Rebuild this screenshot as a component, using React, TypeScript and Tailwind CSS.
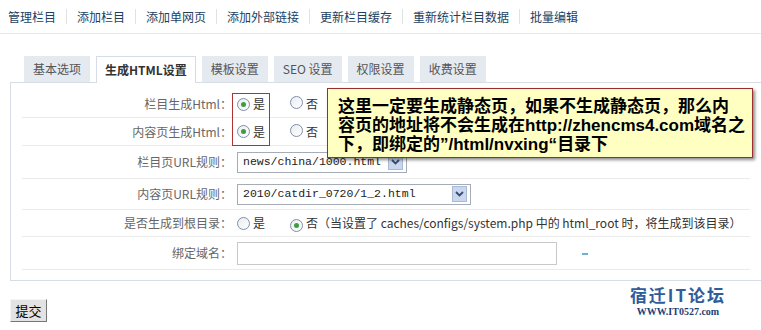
import React from "react";

const CJK = '"Noto Sans CJK SC", "Liberation Sans", sans-serif';

function Radio({ checked }: { checked?: boolean }) {
  return (
    <span className="inline-flex w-[13px] h-[13px] shrink-0 rounded-full border border-[#7f8fa6] bg-gradient-to-br from-[#e9ecf1] to-white items-center justify-center">
      {checked && <span className="w-[5px] h-[5px] rounded-full bg-[#3c9f3c]" />}
    </span>
  );
}

function SelectArrow() {
  return (
    <span className="flex w-[15px] h-[16px] items-center justify-center bg-[#c9d7ef] border border-[#a8bad8]">
      <svg width="9" height="6" viewBox="0 0 9 6">
        <path d="M1 1 L4.5 4.5 L8 1" fill="none" stroke="#3a4c6e" strokeWidth="1.8" />
      </svg>
    </span>
  );
}

function Row({ label, h, children }: { label: string; h: string; children?: React.ReactNode }) {
  return (
    <div className={`flex items-center border-b border-[#ebebeb] ${h}`}>
      <div className="w-[210px] text-right text-[12px] text-[#666]">{label}</div>
      <div className="pl-[5px] flex items-center text-[12px] text-[#333]">{children}</div>
    </div>
  );
}

export default function App() {
  const nav = ["管理栏目", "添加栏目", "添加单网页", "添加外部链接", "更新栏目缓存", "重新统计栏目数据", "批量编辑"];
  const tabs = ["基本选项", "生成HTML设置", "模板设置", "SEO 设置", "权限设置", "收费设置"];
  const latin = { fontFamily: '"Liberation Sans", sans-serif' };
  return (
    <div className="relative w-[761px] h-[330px] overflow-hidden bg-white" style={{ fontFamily: CJK }}>
      {/* nav */}
      <div className="flex items-center h-[34px] border-b border-[#e8e8e8] pl-[8px]">
        {nav.map((n, i) => (
          <React.Fragment key={n}>
            {i > 0 && <span className="w-px h-[15px] bg-[#e2e2e2] mx-[10px]" />}
            <span className="text-[12px] text-[#1c3f62]">{n}</span>
          </React.Fragment>
        ))}
      </div>

      {/* tabs */}
      <div className="flex items-start gap-[6px] pl-[24px] mt-[22px] h-[27px]">
        {tabs.map((t, i) =>
          i === 1 ? (
            <div
              key={t}
              className="relative z-10 h-[27px] px-[8px] flex items-center bg-white border border-b-0 border-[#d5dce5] text-[12px] font-bold text-[#333]"
            >
              {t}
            </div>
          ) : (
            <div key={t} className="h-[26px] px-[9px] flex items-center bg-[#e5eaf1] text-[12px] text-[#555]">
              {t}
            </div>
          )
        )}
      </div>

      {/* panel */}
      <div className="-mt-px ml-[10px] w-[752px] border border-[#d7dde6] px-[11px] pt-[8px] pb-[10px]">
        <Row label="栏目生成Html：" h="h-[27px]">
          <Radio checked />
          <span className="ml-[3px]">是</span>
          <span className="ml-[25px]"><Radio /></span>
          <span className="ml-[3px]">否</span>
        </Row>
        <Row label="内容页生成Html：" h="h-[28px]">
          <Radio checked />
          <span className="ml-[3px]">是</span>
          <span className="ml-[25px]"><Radio /></span>
          <span className="ml-[3px]">否</span>
        </Row>
        <Row label="栏目页URL规则：" h="h-[33px]">
          <div className="w-[170px] h-[21px] border border-[#a5acb5] flex items-center justify-between pl-[5px] pr-[3px] bg-white">
            <span className="text-[11.5px] text-[#222]" style={{ fontFamily: '"Liberation Mono", monospace' }}>
              news/china/1000.html
            </span>
            <SelectArrow />
          </div>
        </Row>
        <Row label="内容页URL规则：" h="h-[31px]">
          <div className="w-[234px] h-[21px] border border-[#a5acb5] flex items-center justify-between pl-[5px] pr-[3px] bg-white">
            <span className="text-[11.5px] text-[#222]" style={{ fontFamily: '"Liberation Mono", monospace' }}>
              2010/catdir_0720/1_2.html
            </span>
            <SelectArrow />
          </div>
        </Row>
        <Row label="是否生成到根目录：" h="h-[27px]">
          <Radio />
          <span className="ml-[3px]">是</span>
          <span className="ml-[25px]"><Radio checked /></span>
          <span className="ml-[3px]">否（当设置了 caches/configs/system.php 中的 html_root 时，将生成到该目录）</span>
        </Row>
        <Row label="绑定域名：" h="h-[33px]">
          <div className="w-[320px] h-[23px] border border-[#c9c9c9] bg-white" />
          <span className="ml-[25px] w-[6px] h-[2px] bg-[#6fb0d8] mt-[2px]" />
        </Row>
      </div>

      {/* submit */}
      <div className="mt-[16px] ml-[10px]">
        <button className="w-[37px] h-[23px] bg-[#e3e3e3] border border-t-[#f5f5f5] border-l-[#f5f5f5] border-r-[#777] border-b-[#777] text-[13px] text-black leading-none">
          提交
        </button>
      </div>

      {/* red highlight box */}
      <div className="absolute left-[232px] top-[93px] w-[38px] h-[53px] border border-[#b03333]" />

      {/* callout */}
      <div className="absolute left-[327px] top-[88px] w-[426px] h-[70px] bg-[#ffffc2] border border-[#9a2e2e] shadow-[2px_2px_3px_rgba(0,0,0,0.45)] pl-[10px] pt-[6px] flex flex-col text-[17px] font-bold text-black">
        <div className="h-[19px] leading-[19px] whitespace-nowrap">这里一定要生成静态页，如果不生成静态页，那么内</div>
        <div className="h-[19px] leading-[19px] whitespace-nowrap">
          容页的地址将不会生成在<span style={latin}>http://zhencms4.com</span>域名之
        </div>
        <div className="h-[19px] leading-[19px] whitespace-nowrap">
          下，即绑定的<span style={latin}>”/html/nvxing“</span>目录下
        </div>
      </div>

      {/* watermark logo */}
      <div className="absolute left-[627px] top-[285px] w-[102px] flex flex-col items-center">
        <div className="h-[19px] text-[17px] leading-[19px] text-[#2f5d9c] tracking-[2px] font-bold">宿迁IT论坛</div>
        <div className="h-[11px] mt-[2px] text-[10px] leading-[11px] font-bold text-[#1f3f7a]" style={{ fontFamily: '"Liberation Serif", serif' }}>
          WWW.IT0527.com
        </div>
      </div>
    </div>
  );
}
